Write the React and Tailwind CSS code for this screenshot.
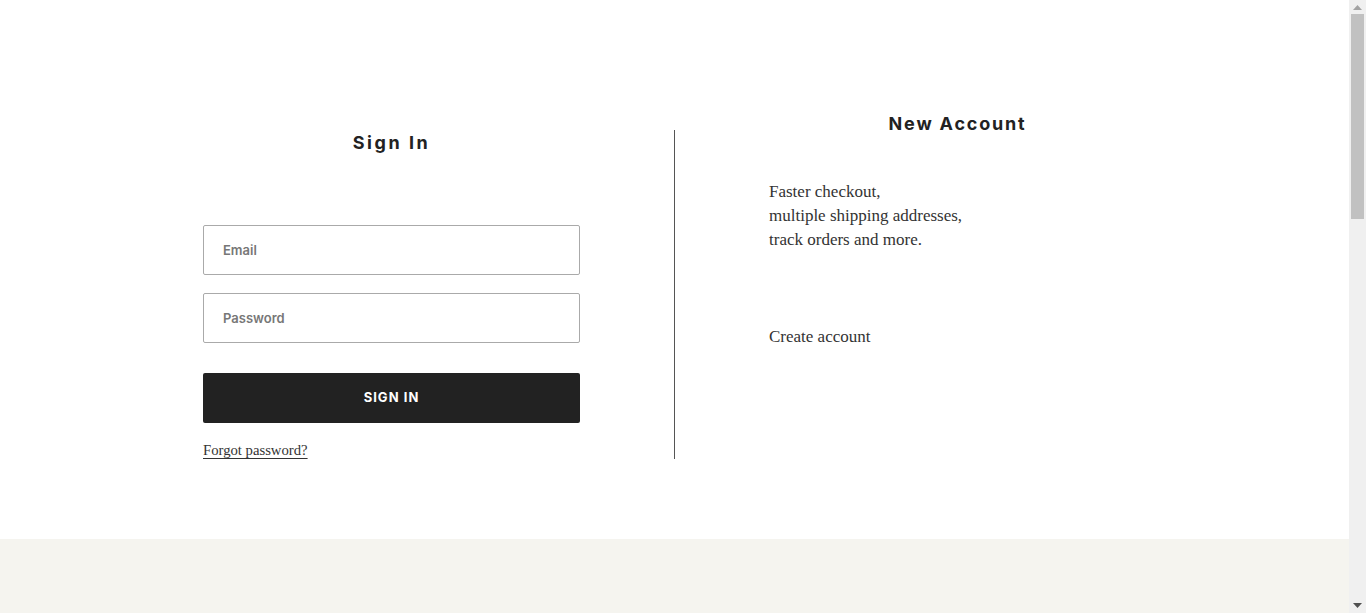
function Scrollbar() {
  return (
    <aside className="flex h-full w-[17px] shrink-0 flex-col bg-[#f0f0f0]">
      <div className="flex h-[14px] items-center justify-center pt-[1px]">
        <svg width="9" height="5" viewBox="0 0 9 5">
          <polygon points="4.5,0 9,5 0,5" fill="#a3a3a3" />
        </svg>
      </div>
      <div className="flex-1 px-[2px]">
        <div className="h-[205px] w-full bg-[#c1c1c1]" />
      </div>
      <div className="flex h-[14px] items-center justify-center pb-[1px]">
        <svg width="9" height="5" viewBox="0 0 9 5">
          <polygon points="0,0 9,0 4.5,5" fill="#505050" />
        </svg>
      </div>
    </aside>
  );
}

export default function App() {
  const serif = { fontFamily: '"Liberation Serif", "Times New Roman", serif' };
  return (
    <div className="flex h-screen bg-white" style={{ fontFamily: 'Inter, "Noto Sans", sans-serif' }}>
      <div className="flex-1 overflow-hidden">
        <main className="h-[539px] pt-[111px]">
          <div className="mx-auto flex w-[943px] items-start">
            {/* sign in */}
            <section className="w-[377px] pt-[19px]">
              <h2 className="text-center text-[18px] leading-[26px] font-bold tracking-[0.14em] text-[#222]">
                Sign In
              </h2>
              <form className="mt-[69px] flex flex-col" onSubmit={(e) => e.preventDefault()}>
                <input
                  type="email"
                  placeholder="Email"
                  className="h-[50px] w-full rounded-[2px] border border-[#aaa] px-[19px] text-[13px] font-semibold text-[#333] placeholder:text-[#777] outline-none"
                />
                <input
                  type="password"
                  placeholder="Password"
                  className="mt-[18px] h-[50px] w-full rounded-[2px] border border-[#aaa] px-[19px] text-[13px] font-semibold text-[#333] placeholder:text-[#777] outline-none"
                />
                <button
                  type="submit"
                  className="mt-[30px] h-[50px] w-full rounded-[2px] bg-[#222] text-[13px] font-bold tracking-[0.08em] text-white"
                >
                  SIGN IN
                </button>
              </form>
              <a
                href="#"
                className="mt-[17px] inline-block text-[14.7px] leading-[20px] text-[#333] underline underline-offset-[3px] decoration-[#333]"
                style={serif}
              >
                Forgot password?
              </a>
            </section>

            <div className="mx-[94px] mt-[19px] h-[329px] w-px shrink-0 bg-[#555]" />

            {/* new account */}
            <section className="w-[377px]">
              <h2 className="text-center text-[18px] leading-[26px] font-bold tracking-[0.1em] text-[#222]">
                New Account
              </h2>
              <p className="mt-[43px] text-[17px] leading-[24px] text-[#333]" style={serif}>
                Faster checkout,
                <br />
                multiple shipping addresses,
                <br />
                track orders and more.
              </p>
              <a href="#" className="mt-[73px] block text-[17px] leading-[24px] text-[#333]" style={serif}>
                Create account
              </a>
            </section>
          </div>
        </main>
        <footer className="h-[1200px] bg-[#f5f4ef]" />
      </div>
      <Scrollbar />
    </div>
  );
}
